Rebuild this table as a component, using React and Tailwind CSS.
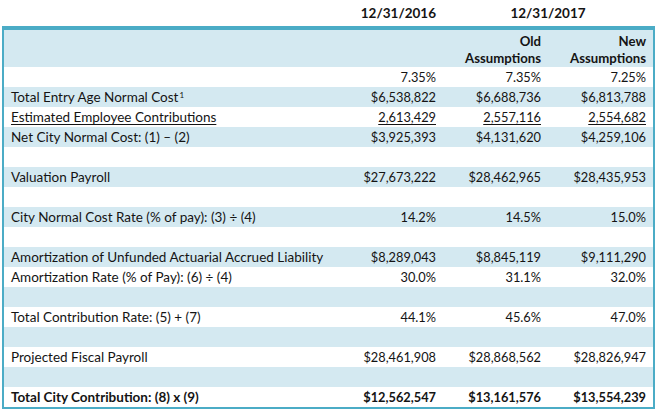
import React from 'react';

const rows = [
  { label: '', vals: ['7.35%', '7.35%', '7.25%'] },
  { label: 'Total Entry Age Normal Cost', sup: '1', vals: ['$6,538,822', '$6,688,736', '$6,813,788'] },
  { label: 'Estimated Employee Contributions', underline: true, vals: ['2,613,429', '2,557,116', '2,554,682'] },
  { label: 'Net City Normal Cost: (1) – (2)', vals: ['$3,925,393', '$4,131,620', '$4,259,106'] },
  { blank: true },
  { label: 'Valuation Payroll', vals: ['$27,673,222', '$28,462,965', '$28,435,953'] },
  { blank: true },
  { label: 'City Normal Cost Rate (% of pay): (3) ÷ (4)', vals: ['14.2%', '14.5%', '15.0%'] },
  { blank: true },
  { label: 'Amortization of Unfunded Actuarial Accrued Liability', vals: ['$8,289,043', '$8,845,119', '$9,111,290'] },
  { label: 'Amortization Rate (% of Pay): (6) ÷ (4)', vals: ['30.0%', '31.1%', '32.0%'] },
  { blank: true },
  { label: 'Total Contribution Rate: (5) + (7)', vals: ['44.1%', '45.6%', '47.0%'] },
  { blank: true },
  { label: 'Projected Fiscal Payroll', vals: ['$28,461,908', '$28,868,562', '$28,826,947'] },
  { blank: true },
  { label: 'Total City Contribution: (8) x (9)', bold: true, vals: ['$12,562,547', '$13,161,576', '$13,554,239'] },
];

const cols = 'grid grid-cols-[334px_105px_105px_105px]';

export default function App() {
  return (
    <div className="w-[658px] h-[411px] bg-white text-[#141414] font-['Lato','Liberation_Sans',sans-serif] text-[12.8px]">
      {/* Dates */}
      <div className="ml-[4px] w-[649px] h-[26px] grid grid-cols-[334px_105px_210px] items-end pb-[5px] font-bold leading-[15px] text-[13.5px]">
        <div />
        <div className="text-right pr-[7px]">12/31/2016</div>
        <div className="text-center">12/31/2017</div>
      </div>

      <div className="ml-[2px] w-[653px] border-t-4 border-x-2 border-b-2 border-[#4bacc6]">
        {/* Header */}
        <div className={`${cols} h-[37px] bg-[#d4e9f1] font-bold leading-[17px] text-[13.2px]`}>
          <div />
          <div />
          <div className="flex flex-col justify-end text-right pr-[7px]">
            <span>Old</span>
            <span>Assumptions</span>
          </div>
          <div className="flex flex-col justify-end text-right pr-[7px]">
            <span>New</span>
            <span>Assumptions</span>
          </div>
        </div>

        {rows.map((r, i) => (
          <div
            key={i}
            className={`${cols} h-[20px] leading-[15px] ${i % 2 === 1 ? 'bg-[#d4e9f1]' : 'bg-white'} ${r.bold ? 'font-bold' : ''}`}
          >
            <div className="flex items-end pb-[2px] pl-[7px] whitespace-nowrap text-[13.5px]">
              <span className={r.underline ? 'underline underline-offset-2' : ''}>
                {r.label}
                {r.sup && <sup className="text-[8px] ml-[1px]">{r.sup}</sup>}
              </span>
            </div>
            {(r.vals || ['', '', '']).map((v, j) => (
              <div key={j} className="flex items-end justify-end pb-[2px] pr-[7px]">
                <span className={r.underline ? 'underline underline-offset-2' : ''}>{v}</span>
              </div>
            ))}
          </div>
        ))}
      </div>
    </div>
  );
}
